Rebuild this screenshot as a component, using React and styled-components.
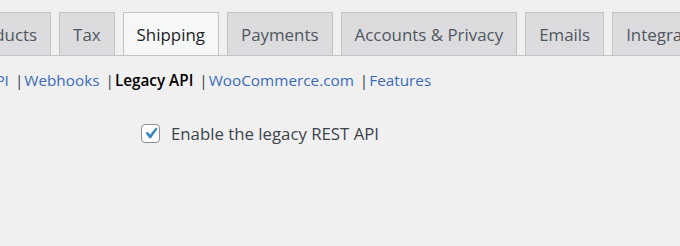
import React from "react";
import styled, { createGlobalStyle } from "styled-components";

const Global = createGlobalStyle`
  html, body { margin: 0; padding: 0; background: #f0f0f1; }
  body { font-family: "Open Sans", "Noto Sans", sans-serif; }
`;

const Page = styled.div`
  width: 680px;
  height: 246px;
  overflow: hidden;
  background: #f0f0f1;
`;

const TabBar = styled.nav`
  display: flex;
  align-items: flex-end;
  gap: 8px;
  padding-top: 12px;
  margin-left: -47px;
  border-bottom: 1px solid #c3c4c7;
  width: 1000px;
`;

const Tab = styled.a`
  flex: none;
  display: flex;
  align-items: center;
  height: 42px;
  padding: 0 13px;
  border: 1px solid #c3c4c7;
  border-bottom: none;
  background: ${(p) => (p.$active ? "#f6f7f7" : "#dcdcde")};
  color: ${(p) => (p.$active ? "#1d2327" : "#50575e")};
  font-size: 16.9px;
  font-weight: 500;
  white-space: nowrap;
  text-decoration: none;
`;

const SubNav = styled.ul`
  display: flex;
  align-items: center;
  list-style: none;
  margin: 13px 0 0 -53px;
  padding: 0;
  font-size: 15.3px;
  line-height: 22px;
  white-space: nowrap;
`;

const SubItem = styled.li`
  display: flex;
  align-items: center;
`;

const Sep = styled.span`
  color: #3c434a;
  margin: 0 1px 0 6px;
`;

const SubLink = styled.a`
  color: ${(p) => (p.$current ? "#000" : "#3a6cb6")};
  font-weight: ${(p) => (p.$current ? 600 : 400)};
  text-decoration: none;
`;

const FormRow = styled.label`
  display: flex;
  align-items: center;
  gap: 11px;
  margin: 31px 0 0 141px;
  font-size: 16.8px;
  color: #3c434a;
`;

const Box = styled.span`
  flex: none;
  width: 17px;
  height: 17px;
  border: 1px solid #8c8f94;
  border-radius: 4px;
  background: #fff;
  display: flex;
  align-items: center;
  justify-content: center;
  overflow: visible;
`;

const Check = styled.svg`
  flex: none;
  width: 23px;
  height: 23px;
  margin: -3px;
`;

const tabs = ["Products", "Tax", "Shipping", "Payments", "Accounts & Privacy", "Emails", "Integration", "Advanced"];
const links = ["REST API", "Webhooks", "Legacy API", "WooCommerce.com", "Features"];

export default function App() {
  return (
    <Page>
      <Global />
      <TabBar>
        {tabs.map((t) => (
          <Tab key={t} $active={t === "Shipping"}>{t}</Tab>
        ))}
      </TabBar>
      <SubNav>
        {links.map((l, i) => (
          <SubItem key={l}>
            {i > 0 && <Sep>|</Sep>}
            <SubLink $current={l === "Legacy API"}>{l}</SubLink>
          </SubItem>
        ))}
      </SubNav>
      <FormRow>
        <Box>
          <Check viewBox="0 0 20 20">
            <path d="M14.83 4.89l1.34.94-5.81 8.38H9.02L5.78 9.67l1.34-1.25 2.57 2.4z" fill="#3582c4" />
          </Check>
        </Box>
        Enable the legacy REST API
      </FormRow>
    </Page>
  );
}
